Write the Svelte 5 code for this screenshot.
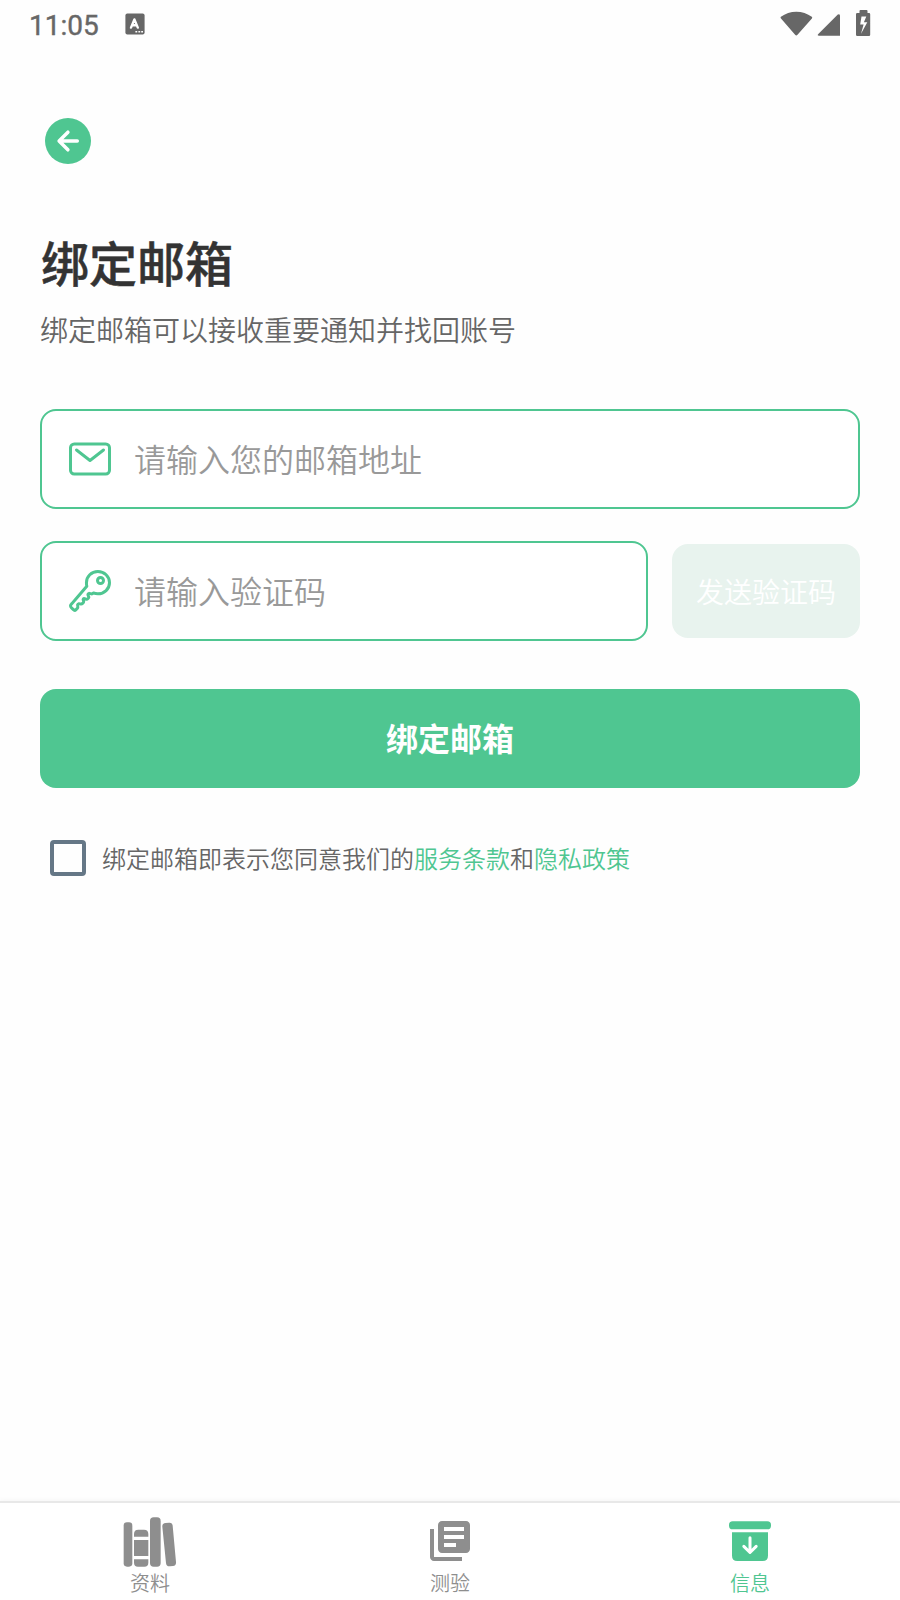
<script>
  let email = $state('');
  let code = $state('');
  const tabs = [
    { id: 'library', label: '资料' },
    { id: 'quiz', label: '测验' },
    { id: 'info', label: '信息', active: true }
  ];
</script>

<div class="screen">
  <header class="status">
    <span class="time">11:05</span>
    <svg class="app" width="20" height="22" viewBox="0 0 20 22">
      <rect x="0.4" y="0.6" width="19.2" height="20.8" rx="2" fill="#676767" />
      <path d="M6 14.6L9.4 6.4L12.8 14.6M7.3 12.2H11.6" fill="none" stroke="#fff" stroke-width="2.4" stroke-linecap="round" stroke-linejoin="round" />
      <path d="M10.4 18.8h1.8M13.4 18.8h1.8M16.2 18.8h1.8" stroke="#fff" stroke-width="1.5" />
    </svg>
    <svg class="system" width="92" height="28" viewBox="0 0 92 28" fill="#676767">
      <path d="M.9 6.8C9.5-.1 23.1-.1 31.8 6.8q.8.8.1 1.6L17.5 24.8q-1.2 1.3-2.4 0L1 8.4q-.8-.9-.1-1.6z" />
      <path d="M60 5.7V25.7H39q-2.2 0-.7-1.7L57.8 4.6Q60 3.4 60 5.7z" />
      <path fill-rule="evenodd" d="M80.5 0h6q1 0 1 1v2H89q1.2 0 1.2 1.2v20.5q0 1.3-1.2 1.3H77.3q-1.3 0-1.3-1.3V4.2Q76 3 77.3 3h2.2V1q0-1 1-1zM81.5 6.6L80.2 14.5h3.4L81 23.7l6.3-11.5h-3.4L86.3 6.6z" />
    </svg>
  </header>

  <main>
    <button class="back" aria-label="返回">
      <svg width="46" height="46" viewBox="0 0 46 46">
        <circle cx="23" cy="23" r="23" fill="#4fc691" />
        <path d="M22.9 14.2L14.1 23L22.9 31.8M14.5 23H32.3" fill="none" stroke="#fff" stroke-width="3.5" stroke-linecap="round" stroke-linejoin="round" />
      </svg>
    </button>
    <h1>绑定邮箱</h1>
    <p class="intro">绑定邮箱可以接收重要通知并找回账号</p>

    <label class="field">
      <svg class="line" width="48" height="48" viewBox="0 0 512 512">
        <rect x="48" y="96" width="416" height="320" rx="40" />
        <path d="M112 160l144 112 144-112" />
      </svg>
      <input bind:value={email} placeholder="请输入您的邮箱地址" />
    </label>

    <div class="row">
      <label class="field">
        <svg class="line" width="48" height="48" viewBox="0 0 512 512">
          <path d="M218.1 167.17c0 13 0 25.6 4.1 37.4-43.1 50.6-156.9 184.3-167.5 194.5a20.17 20.17 0 00-6.7 15c0 8.5 5.2 16.7 9.6 21.3 6.6 6.9 34.8 33 40 28 15.4-15 18.5-19 24.8-25.2 9.5-9.3-1-28.3 2.3-36s6.8-9.2 12.5-10.4 15.8 2.9 23.7 3c8.3.1 12.8-3.4 19-9.2 5-4.6 8.6-8.9 8.7-15.6.2-9-12.8-20.9-3.1-30.4s23.7 6.2 34 5 22.8-15.5 24.1-21.6-11.7-21.8-9.7-30.7c.7-3 6.8-10 11.4-11s25 6.9 29.6 5.9c5.6-1.2 12.1-7.1 17.4-10.4 15.5 6.7 29.6 9.4 47.7 9.4 68.5 0 124-53.4 124-119.2S408.5 48 340 48s-121.9 53.37-121.9 119.17z" />
          <circle cx="368" cy="144" r="32" />
        </svg>
        <input bind:value={code} placeholder="请输入验证码" />
      </label>
      <button class="send">发送验证码</button>
    </div>

    <button class="submit">绑定邮箱</button>

    <div class="terms">
      <span class="check" role="checkbox" aria-checked="false" aria-label="同意" tabindex="0"></span>
      <span>绑定邮箱即表示您同意我们的<b>服务条款</b>和<b>隐私政策</b></span>
    </div>
  </main>

  <nav>
    {#each tabs as tab}
      <div class="tab" class:active={tab.active}>
        <div class="icon">
          {#if tab.id === 'library'}
            <svg class="books" width="56" height="56" viewBox="96 72 168 168" fill="currentColor">
              <rect x="101" y="97" width="26" height="133" rx="10" />
              <path d="M132 140v-8q0-13 13-13h17q13 0 13 13v8zM132 150h43v48h-43zM132 208h43v10q0 12-12 12h-19q-12 0-12-12z" />
              <rect x="180" y="82" width="32" height="148" rx="11" />
              <path d="M227 99l10-1q10-1 11 9l10 109q1 11-9 12l-9 1q-11 1-12-10L217 110q-1-10 10-11z" />
            </svg>
          {:else if tab.id === 'quiz'}
            <svg width="48" height="48" viewBox="0 0 24 24" fill="currentColor">
              <path d="M4 6H2v14c0 1.1.9 2 2 2h14v-2H4V6zm16-4H8c-1.1 0-2 .9-2 2v12c0 1.1.9 2 2 2h12c1.1 0 2-.9 2-2V4c0-1.1-.9-2-2-2zm-1 9H9V9h10v2zm-4 4H9v-2h6v2zm4-8H9V5h10v2z" />
            </svg>
          {:else}
            <svg width="48" height="48" viewBox="0 0 144 144" fill="currentColor">
              <rect x="9" y="13" width="126" height="24" rx="11" />
              <path d="M18 46h108v70q0 16-16 16H34q-16 0-16-16z" />
              <path d="M72 62v43M53.500 88L72 106.500 90.500 88" fill="none" stroke="#fff" stroke-width="9" stroke-linecap="round" stroke-linejoin="round" />
            </svg>
          {/if}
        </div>
        <span>{tab.label}</span>
      </div>
    {/each}
  </nav>
</div>

<style>
  :global(body) { margin: 0; }
  .screen {
    width: 900px;
    height: 1600px;
    display: flex;
    flex-direction: column;
    overflow: hidden;
    background: #fefefe;
    color: #666;
    font-family: "Noto Sans CJK SC", sans-serif;
    font-weight: 350;
  }
  button, input { font: inherit; border: 0; margin: 0; padding: 0; background: none; outline: 0; }
  svg { display: block; flex: none; }
  .status {
    height: 48px;
    display: flex;
    align-items: flex-start;
    padding: 0 28px 0 29px;
    box-sizing: border-box;
  }
  .time {
    font: 400 28px/32px Roboto, sans-serif;
    -webkit-text-stroke: 0.4px #676767;
    width: 96px;
    margin-top: 10px;
    color: #676767;
  }
  .app { margin-top: 13px; }
  .system { margin: 10px 0 0 auto; }
  main { flex: 1; padding: 70px 40px 0; }
  .back { display: block; margin-left: 5px; height: 46px; }
  h1 { margin: 61px 0 0 1px; font-size: 48px; line-height: 72px; font-weight: 500; color: #333; -webkit-text-stroke: 0.5px #333; }
  .intro { margin: 12px 0 0; font-size: 28px; line-height: 40px; }
  .field {
    display: flex;
    align-items: center;
    gap: 20px;
    height: 100px;
    padding: 0 24px;
    border: 2px solid #4fc691;
    border-radius: 16px;
    box-sizing: border-box;
    background: #fff;
  }
  main > .field { margin-top: 60px; }
  .line { fill: none; stroke: #4fc691; stroke-width: 32; stroke-linejoin: round; stroke-linecap: round; }
  input { flex: 1; min-width: 0; height: 60px; padding-bottom: 2px; box-sizing: border-box; font-size: 32px; color: #333; }
  input::placeholder { color: #999; opacity: 1; }
  .row { display: flex; align-items: center; gap: 24px; margin-top: 32px; }
  .row .field { flex: 1; }
  .send { width: 188px; height: 94px; padding-bottom: 1px; border-radius: 16px; background: #e8f3ee; color: #fff; font-size: 28px; }
  .submit {
    display: block;
    width: 100%;
    height: 99px;
    margin-top: 48px;
    padding-bottom: 3px;
    border-radius: 16px;
    background: #4fc691;
    color: #fff;
    font-size: 32px;
    font-weight: 700;
  }
  .terms { display: flex; align-items: center; gap: 16px; margin: 52px 0 0 10px; height: 36px; font-size: 24px; line-height: 36px; }
  .terms b { font-weight: inherit; color: #4fc691; }
  .check { width: 36px; height: 36px; box-sizing: border-box; border: 4px solid #657786; border-radius: 4px; }
  nav {
    display: flex;
    height: 99px;
    box-sizing: border-box;
    border-top: 2px solid #e8e8e8;
    box-shadow: 0 -1px 5px rgba(0, 0, 0, .04);
    background: #fff;
  }
  .tab { flex: 1; display: flex; flex-direction: column; align-items: center; color: #8e8e8e; font-size: 20px; line-height: 28px; }
  .icon { height: 48px; margin-top: 14px; display: flex; align-items: center; }
  .books { margin-top: 2px; }
  .tab span { margin-top: 4px; }
  .active { color: #4fc691; }
</style>
